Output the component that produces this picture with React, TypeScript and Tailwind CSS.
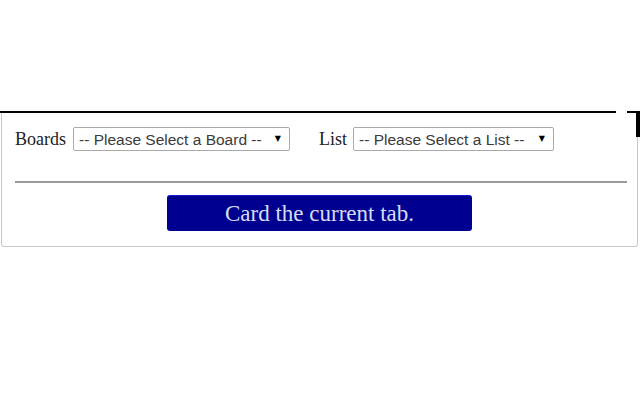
export default function App() {
  return (
    <div className="w-[640px] h-[400px] bg-white relative">
      <div className="h-[111px]" />
      {/* top dark edge */ }
      <div className="flex h-[2px]">
        <div className="w-[616px] bg-black" />
        <div className="w-[11px] bg-white" />
        <div className="flex-1 bg-black" />
      </div>
      <div className="absolute left-[636px] top-[111px] w-[4px] h-[26px] bg-black" />

      <div className="ml-[1px] w-[637px] h-[134px] border border-t-0 border-[#c9c9c9] rounded-b-[3px] pl-[13px] pr-[12px] pt-[14px] font-['Liberation_Serif',serif]">
        <div className="flex items-center h-[24px]">
          <span className="text-[18px] text-[#222] mr-[7px]">Boards</span>
          <div className="relative w-[217px] h-[24px]">
            <select className="appearance-none w-full h-full border border-[#a9a9a9] rounded-[2px] bg-white pl-[5px] text-[15.5px] text-[#3a3a3a] font-['Liberation_Sans',Arial,sans-serif] outline-none">
              <option>-- Please Select a Board --</option>
            </select>
            <span className="absolute right-[9px] inset-y-0 flex items-center text-[8px] text-black font-['DejaVu_Sans',sans-serif] pointer-events-none">▼</span>
          </div>
          <span className="text-[18px] text-[#222] ml-[29px] mr-[6px]">List</span>
          <div className="relative w-[201px] h-[24px]">
            <select className="appearance-none w-full h-full border border-[#a9a9a9] rounded-[2px] bg-white pl-[5px] text-[15.5px] text-[#3a3a3a] font-['Liberation_Sans',Arial,sans-serif] outline-none">
              <option>-- Please Select a List --</option>
            </select>
            <span className="absolute right-[9px] inset-y-0 flex items-center text-[8px] text-black font-['DejaVu_Sans',sans-serif] pointer-events-none">▼</span>
          </div>
        </div>

        <div className="mt-[30px] w-[612px] h-[2px] bg-[#9a9a9a]" />

        <div className="flex justify-center mt-[12px] -ml-[1px]">
          <button className="w-[305px] h-[36px] rounded-[3px] bg-[#000090] border-t border-[#1a1ad0] text-[23px] text-[#d6def2] leading-none">
            Card the current tab.
          </button>
        </div>
      </div>
    </div>
  );
}
